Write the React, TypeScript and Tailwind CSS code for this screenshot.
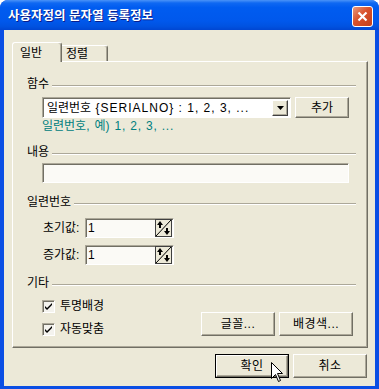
import React from 'react';

const font = '[font-family:"Liberation_Sans","Noto_Sans_CJK_KR",sans-serif]';

function Etched({ label }: { label: string }) {
    return (
        <div className="flex items-center h-[14px] pl-[14px] pr-[11px]">
            <span className="leading-[14px] text-black mr-[3px]">{label}</span>
            <div className="flex-1 h-[2px] mt-[4px] border-t border-t-[#ACA899] border-b border-b-white" />
        </div>
    );
}

function Btn({ label, w, isDefault }: { label: string; w: number; isDefault?: boolean }) {
    return (
        <div style={{ width: w }} className={isDefault ? 'flex h-[24px] border border-black' : 'flex h-[24px]'}>
            <div className="flex-1 flex items-center justify-center border border-t-white border-l-white border-r-[#716F64] border-b-[#716F64] shadow-[inset_-1px_-1px_0_#ACA899] bg-[#ECE9D8] leading-[14px] text-black tracking-[0.5px]">
                {label}
            </div>
        </div>
    );
}

function SpinArrows() {
    return (
        <svg width="17" height="18" viewBox="0 0 17 18" className="shrink-0">
            <rect x="0.5" y="0.5" width="16" height="17" fill="#ECE9D8" stroke="#404040" />
            <line x1="1" y1="17" x2="16" y2="1" stroke="#000" />
            <path d="M5 2 L2 6 L4 6 L4 9 L6 9 L6 6 L8 6 Z" fill="#000" />
            <path d="M12 16 L9 12 L11 12 L11 9 L13 9 L13 12 L15 12 Z" fill="#000" />
        </svg>
    );
}

function Spin({ label }: { label: string }) {
    return (
        <div className="flex items-center h-[20px] pl-[30px]">
            <span className="w-[42px] leading-[14px] text-black">{label}</span>
            <div className="w-[89px] h-[20px] flex items-center border border-t-[#ACA899] border-l-[#ACA899] border-r-white border-b-white shadow-[inset_1px_1px_0_#716F64] bg-[#FBFAF6] pl-[2px] pr-[1px]">
                <span className="flex-1 leading-[14px] text-black">1</span>
                <SpinArrows />
            </div>
        </div>
    );
}

function Check({ label }: { label: string }) {
    return (
        <div className="flex items-center h-[16px]">
            <div className="w-[13px] h-[13px] border border-t-[#ACA899] border-l-[#ACA899] border-r-white border-b-white shadow-[inset_1px_1px_0_#716F64] bg-[#F4F3EE] flex items-center justify-center">
                <svg width="9" height="9" viewBox="0 0 9 9">
                    <path d="M1 4 L3 6 L8 1 L8 3 L3 8 L1 6 Z" fill="#000" />
                </svg>
            </div>
            <span className="ml-[5px] leading-[14px] text-black">{label}</span>
        </div>
    );
}

export default function App() {
    return (
        <div className={`${font} text-[12px] bg-white w-[379px] h-[389px]`}>
            <div className="relative w-[379px] h-[389px] flex flex-col bg-[#0A4EE4] rounded-t-[8px] overflow-hidden">
                {/* title bar */}
                <div className="h-[30px] flex items-center justify-between pl-[8px] pr-[6px] bg-[linear-gradient(to_bottom,#4A93F8_0%,#0F68F2_10%,#005CF0_25%,#0058EC_70%,#0052E0_88%,#0046D2_100%)]">
                    <span className="pt-[1px] text-white font-bold text-[12.5px] leading-[14px] [text-shadow:1px_1px_0_#0A1E8C]">
                        사용자정의 문자열 등록정보
                    </span>
                    <div className="mt-[2px] w-[21px] h-[21px] rounded-[3px] border border-white bg-[linear-gradient(to_bottom_right,#E99A7E,#D9512B_45%,#C2401C)] flex items-center justify-center">
                        <svg width="11" height="11" viewBox="0 0 11 11">
                            <path d="M1.5 1.5 L9.5 9.5 M9.5 1.5 L1.5 9.5" stroke="#fff" strokeWidth="2.2" />
                        </svg>
                    </div>
                </div>

                {/* client area */}
                <div className="flex-1 mx-[4px] mb-[3px] bg-[#ECE9D8] flex flex-col">
                    {/* tabs */}
                    <div className="flex items-end h-[31px] pl-[8px] pt-[12px]">
                        <div className="relative z-10 w-[50px] h-[20px] -mb-[1px] bg-[#ECE9D8] border-l border-t border-l-white border-t-white border-r border-r-[#716F64] rounded-t-[3px] shadow-[inset_-1px_0_0_#ACA899] pl-[7px] pt-[3px] leading-[14px] text-black">
                            일반
                        </div>
                        <div className="w-[46px] h-[16px] border-t border-t-white border-r border-r-[#716F64] rounded-tr-[3px] shadow-[inset_-1px_0_0_#ACA899] pl-[4px] pt-[1px] leading-[14px] text-black">
                            정렬
                        </div>
                    </div>

                    {/* panel */}
                    <div className="ml-[8px] mr-[7px] h-[287px] border border-t-white border-l-white border-r-[#716F64] border-b-[#716F64] shadow-[inset_-1px_-1px_0_#ACA899] flex flex-col">
                        <div className="mt-[15px]">
                            <Etched label="함수" />
                        </div>
                        <div className="mt-[6px] flex items-center h-[21px] pl-[29px] pr-[18px] gap-[4px]">
                            <div className="w-[249px] h-[21px] flex items-center border border-t-[#ACA899] border-l-[#ACA899] border-r-white border-b-white shadow-[inset_1px_1px_0_#716F64] bg-white pl-[4px] pr-[2px]">
                                <span className="flex-1 leading-[14px] text-black whitespace-nowrap">
                                    일련번호<span className="tracking-[1px]"> {'{SERIALNO}'} : 1, 2, 3, ...</span>
                                </span>
                                <div className="w-[16px] h-[16px] flex items-center justify-center border border-t-white border-l-white border-r-[#404040] border-b-[#404040] shadow-[inset_-1px_-1px_0_#ACA899] bg-[#ECE9D8]">
                                    <svg width="7" height="4" viewBox="0 0 7 4">
                                        <path d="M0 0 L7 0 L3.5 4 Z" fill="#000" />
                                    </svg>
                                </div>
                            </div>
                            <div className="flex-1 h-[21px] flex">
                                <div className="flex-1 flex items-center justify-center border border-t-white border-l-white border-r-[#716F64] border-b-[#716F64] shadow-[inset_-1px_-1px_0_#ACA899] leading-[14px] text-black">
                                    추가
                                </div>
                            </div>
                        </div>
                        <div className="mt-[1px] pl-[29px] h-[14px] leading-[14px] text-[#008080] whitespace-nowrap">
                            일련번호<span className="tracking-[0.8px]">, </span>예<span className="tracking-[0.8px]">) 1, 2, 3, ...</span>
                        </div>

                        <div className="mt-[12px]">
                            <Etched label="내용" />
                        </div>
                        <div className="mt-[4px] pl-[29px] pr-[18px]">
                            <div className="h-[20px] border border-t-[#ACA899] border-l-[#ACA899] border-r-white border-b-white shadow-[inset_1px_1px_0_#716F64] bg-[#FBFAF6]" />
                        </div>

                        <div className="mt-[12px]">
                            <Etched label="일련번호" />
                        </div>
                        <div className="mt-[9px]">
                            <Spin label="초기값:" />
                        </div>
                        <div className="mt-[7px]">
                            <Spin label="증가값:" />
                        </div>

                        <div className="mt-[11px]">
                            <Etched label="기타" />
                        </div>
                        <div className="mt-[8px] flex items-end justify-between pl-[29px] pr-[14px]">
                            <div className="flex flex-col gap-[7px]">
                                <Check label="투명배경" />
                                <Check label="자동맞춤" />
                            </div>
                            <div className="flex gap-[4px] mb-[1px]">
                                <Btn label="글꼴..." w={74} />
                                <Btn label="배경색..." w={74} />
                            </div>
                        </div>
                    </div>

                    {/* dialog buttons */}
                    <div className="mt-[6px] flex justify-end gap-[4px] pr-[8px]">
                        <Btn label="확인" w={74} isDefault />
                        <Btn label="취소" w={74} />
                    </div>
                </div>

                {/* mouse cursor */}
                <svg width="13" height="21" viewBox="0 0 13 21" className="absolute left-[271px] top-[362px]">
                    <path d="M0.5 0.5 L0.5 16.5 L4.5 12.5 L7.5 19.5 L9.5 18.5 L6.5 11.5 L11.5 11.5 Z" fill="#fff" stroke="#000" />
                </svg>
            </div>
        </div>
    );
}
